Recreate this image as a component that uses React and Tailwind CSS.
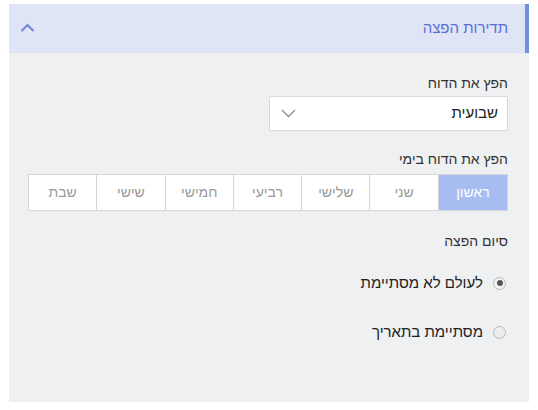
import React from "react";

const days = ["ראשון", "שני", "שלישי", "רביעי", "חמישי", "שישי", "שבת"];

export default function App() {
  return (
    <div className="w-[538px] h-[410px] bg-white pt-[4px] pl-[9px]" style={{ fontFamily: '"Liberation Sans", Arial, sans-serif' }}>
      <div dir="rtl" className="w-[520px] h-[398px] bg-[#eff0f2] flex flex-col">
        <div className="h-[49px] bg-[#dfe5f7] border-r-[4px] border-[#6e8ee0] flex items-center justify-between pr-[17px] pl-[11px]">
          <span className="text-[15px] text-[#5a6fd6]">תדירות הפצה</span>
          <svg width="15" height="10" viewBox="0 0 15 10" className="mt-[-2px]">
            <path d="M1.5 8 L7.5 2 L13.5 8" fill="none" stroke="#6b86d9" strokeWidth="2" />
          </svg>
        </div>
        <div className="flex flex-col pr-[21px] pl-[19px] pt-[20px]">
          <div className="text-[14px] leading-[20px] text-[#333]">הפץ את הדוח</div>
          <div className="mt-[3px] w-[239px] h-[35px] bg-white border border-[#d9d9d9] rounded-[2px] flex items-center justify-between pr-[9px] pl-[11px]">
            <span className="text-[15px] text-[#222]">שבועית</span>
            <svg width="15" height="9" viewBox="0 0 15 9">
              <path d="M1 1 L7.5 7.5 L14 1" fill="none" stroke="#8a8a8a" strokeWidth="1.3" />
            </svg>
          </div>
          <div className="mt-[18px] text-[14px] leading-[20px] text-[#333]">הפץ את הדוח בימי</div>
          <div className="mt-[5px] w-[480px] h-[37px] grid grid-cols-7 border border-[#d6d6d6] bg-white">
            {days.map((d, i) => (
              <div
                key={d}
                className={
                  "flex items-center justify-center text-[14px] " +
                  (i === 0 ? "bg-[#a7bdf2] text-white" : "text-[#9a9a9a] border-r border-[#d6d6d6]")
                }
              >
                {d}
              </div>
            ))}
          </div>
          <div className="mt-[20px] text-[14px] leading-[20px] text-[#333]">סיום הפצה</div>
          <div className="mt-[22px] flex items-center gap-[10px] h-[20px] pr-[2px]">
            <span className="w-[13px] h-[13px] rounded-full border border-[#b8b8b8] bg-[#f2f2f2] flex items-center justify-center">
              <span className="w-[6px] h-[6px] rounded-full bg-[#555]"></span>
            </span>
            <span className="text-[15px] text-[#222]">לעולם לא מסתיימת</span>
          </div>
          <div className="mt-[29px] flex items-center gap-[10px] h-[20px] pr-[2px]">
            <span className="w-[13px] h-[13px] rounded-full border border-[#b8b8b8] bg-[#ececec]"></span>
            <span className="text-[15px] text-[#222]">מסתיימת בתאריך</span>
          </div>
        </div>
      </div>
    </div>
  );
}
